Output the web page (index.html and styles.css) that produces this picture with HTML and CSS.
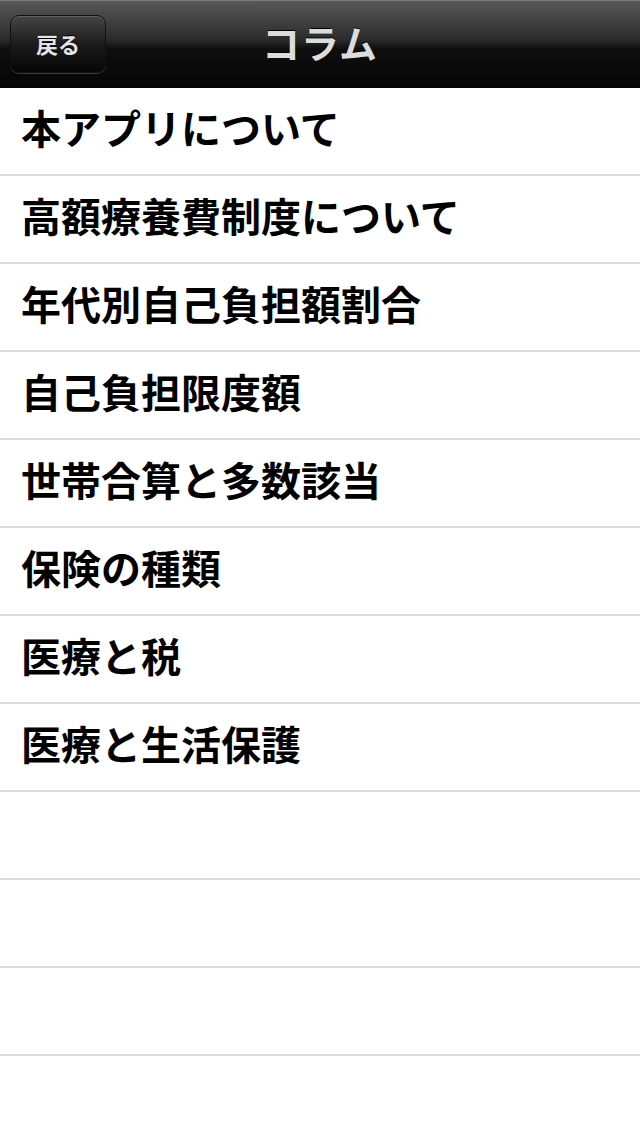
FILE: index.html
```html
<!DOCTYPE html>
<html lang="ja">
<head>
  <meta charset="UTF-8">
  <meta name="viewport" content="width=device-width, initial-scale=1.0">
  <title>コラム</title>
  <link rel="stylesheet" href="styles.css">
</head>
<body>
  <div class="nav-bar">
    <button class="back-btn">戻る</button>
    <h1 class="nav-title">コラム</h1>
  </div>
  <ul class="column-list">
    <li class="column-item">本アプリについて</li>
    <li class="column-item">高額療養費制度について</li>
    <li class="column-item">年代別自己負担額割合</li>
    <li class="column-item">自己負担限度額</li>
    <li class="column-item">世帯合算と多数該当</li>
    <li class="column-item">保険の種類</li>
    <li class="column-item">医療と税</li>
    <li class="column-item">医療と生活保護</li>
    <li class="column-item"></li>
    <li class="column-item"></li>
    <li class="column-item"></li>
    <li class="column-item"></li>
  </ul>
</body>
</html>
```

FILE: styles.css
```css
body {
  margin: 0px;
  background-color: white;
  font-family: "Noto Sans CJK JP", "Noto Sans", sans-serif;
}
.nav-bar {
  height: 88px;
  box-sizing: border-box;
  border-top: 1px solid #7a7a7a;
  background: linear-gradient(#585858, #2a2a2a 45%, #0e0e0e 55%, #050505);
  display: flex;
  align-items: center;
  justify-content: center;
  position: relative;
}
.back-btn {
  position: absolute;
  left: 10px;
  top: 14px;
  width: 96px;
  height: 58px;
  border-radius: 9px;
  border: 1px solid #111;
  background: linear-gradient(#454545, #1c1c1c 50%, #050505);
  box-shadow: inset 0 1px 0 rgba(255, 255, 255, 0.15), 0 1px 0 rgba(255, 255, 255, 0.2);
  color: #e4e4e4;
  font-family: inherit;
  font-size: 22px;
  font-weight: bold;
  padding: 0 0 2px 0;
  text-shadow: 0 -1px 0 #000;
}
.nav-title {
  margin: 0;
  margin-top: -6px;
  color: #dcdcdc;
  font-size: 38px;
  font-weight: bold;
  letter-spacing: 1px;
  text-shadow: 0 -1px 0 #000;
}
.column-list {
  list-style: none;
  margin: 0;
  padding: 0;
}
.column-item {
  height: 88px;
  box-sizing: border-box;
  border-bottom: 2px solid #dcdcdc;
  padding-left: 21px;
  padding-bottom: 8px;
  display: flex;
  align-items: center;
  font-size: 40px;
  font-weight: bold;
  color: #000;
}
```
